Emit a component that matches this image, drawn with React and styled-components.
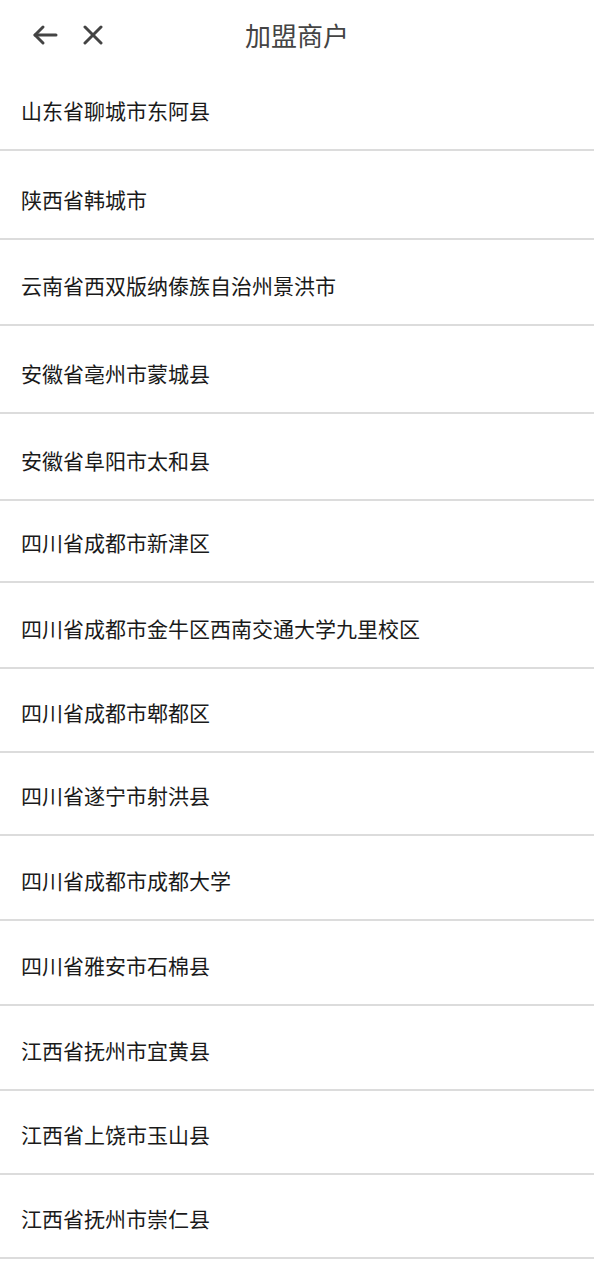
import React from "react";
import styled, { createGlobalStyle } from "styled-components";

const GlobalStyle = createGlobalStyle`
  html, body {
    margin: 0;
    padding: 0;
    background: #ffffff;
  }
  body {
    font-family: "Noto Sans CJK SC", "Noto Sans", sans-serif;
  }
`;

const Page = styled.div`
  width: 594px;
  background: #fff;
`;

const Header = styled.div`
  position: relative;
  height: 70px;
  display: flex;
  align-items: center;
  justify-content: center;
`;

const NavButtons = styled.div`
  position: absolute;
  left: 31px;
  top: 0;
  height: 100%;
  display: flex;
  align-items: center;
  gap: 20px;
`;

const IconButton = styled.button`
  border: 0;
  background: transparent;
  padding: 0;
  width: 28px;
  height: 30px;
  display: flex;
  align-items: center;
  justify-content: center;
  color: #444;
`;

const Title = styled.h1`
  margin: 0;
  font-size: 26px;
  font-weight: 400;
  color: #444;
  line-height: 1;
`;

const List = styled.ul`
  list-style: none;
  margin: 0;
  padding: 0;
`;

const Row = styled.li`
  box-sizing: border-box;
  height: ${(p) => p.$h}px;
  display: flex;
  align-items: flex-end;
  padding: 0 21px 25px;
  border-bottom: 2px solid #dcdcdc;
  font-size: 21px;
  line-height: 28px;
  color: #1a1a1a;
`;

const shops = [
  ["山东省聊城市东阿县", 81],
  ["陕西省韩城市", 89],
  ["云南省西双版纳傣族自治州景洪市", 86],
  ["安徽省亳州市蒙城县", 88],
  ["安徽省阜阳市太和县", 87],
  ["四川省成都市新津区", 82],
  ["四川省成都市金牛区西南交通大学九里校区", 86],
  ["四川省成都市郫都区", 84],
  ["四川省遂宁市射洪县", 83],
  ["四川省成都市成都大学", 85],
  ["四川省雅安市石棉县", 85],
  ["江西省抚州市宜黄县", 85],
  ["江西省上饶市玉山县", 84],
  ["江西省抚州市崇仁县", 84],
];

const App = () => {
  return (
    <Page>
      <GlobalStyle />
      <Header>
        <NavButtons>
          <IconButton aria-label="back">
            <svg width="26" height="22" viewBox="0 0 26 22" fill="none" stroke="currentColor" strokeWidth="3" strokeLinecap="round" strokeLinejoin="round">
              <path d="M24 11H3" />
              <path d="M11 3L3 11l8 8" />
            </svg>
          </IconButton>
          <IconButton aria-label="close">
            <svg width="20" height="20" viewBox="0 0 20 20" fill="none" stroke="currentColor" strokeWidth="3" strokeLinecap="round">
              <path d="M2 2l16 16" />
              <path d="M18 2L2 18" />
            </svg>
          </IconButton>
        </NavButtons>
        <Title>加盟商户</Title>
      </Header>
      <List>
        {shops.map(([name, h]) => (
          <Row key={name} $h={h}>
            {name}
          </Row>
        ))}
      </List>
    </Page>
  );
};

export default App;
